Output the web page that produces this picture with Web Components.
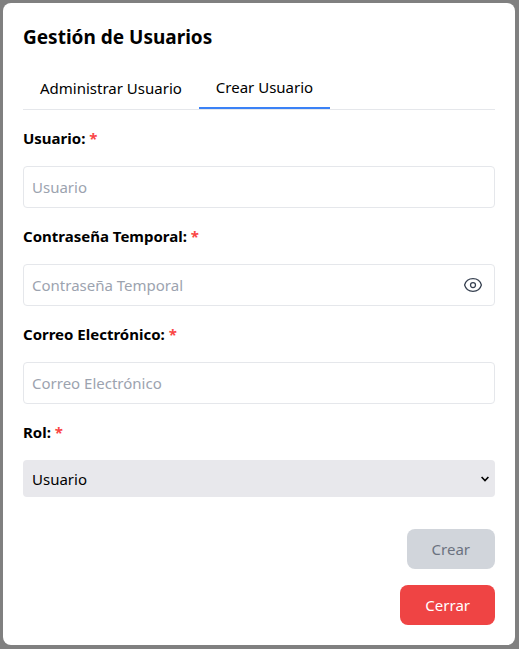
<!DOCTYPE html>
<html lang="es">
<head>
<meta charset="utf-8">
<meta name="viewport" content="width=device-width, initial-scale=1">
<title>Gestión de Usuarios</title>
<style>
  body { margin: 0; min-height: 100vh; box-sizing: border-box; padding: 3px 4px 4px 3px; background: #808080; color: #000; font: 15px/24px "Noto Sans", "Open Sans", sans-serif; }
</style>
</head>
<body>
<user-dialog heading="Gestión de Usuarios">
  <tab-bar slot="tabs">
    <tab-item>Administrar Usuario</tab-item>
    <tab-item active>Crear Usuario</tab-item>
  </tab-bar>
  <text-field label="Usuario" type="text"></text-field>
  <text-field label="Contraseña Temporal" type="password"></text-field>
  <text-field label="Correo Electrónico" type="email"></text-field>
  <role-select label="Rol" options="Usuario,Administrador"></role-select>
  <action-button slot="actions" variant="muted" disabled>Crear</action-button>
  <action-button slot="actions" variant="danger">Cerrar</action-button>
</user-dialog>
<script>
const base = `<style>
  *, *::before, *::after { box-sizing: border-box; }
  :host { display: block; }
  button, input, select { margin: 0; font: inherit; color: inherit; border: 0; background: none; }
  button:not(:disabled) { cursor: pointer; }
</style>`;
const labelStyle = `
  :host { display: grid; gap: 16px; }
  label { font-weight: 700; }
  .mark { color: #fa4646; }`;

class BaseElement extends HTMLElement {
  constructor() {
    super();
    this.attachShadow({ mode: 'open' });
  }
  connectedCallback() {
    this.shadowRoot.innerHTML = base + this.render();
  }
}

class UserDialog extends BaseElement {
  render() {
    return `<style>
      section { padding: 20px; border-radius: 8px; background: #fff; }
      h2 { margin: 0 0 16px; font-size: 19px; line-height: 28px; font-weight: 700; }
      form { display: grid; gap: 16px; margin-top: 16px; }
      footer { display: flex; flex-direction: column; align-items: flex-end; gap: 16px; margin-top: 32px; }
    </style>
    <section role="dialog" aria-labelledby="heading">
      <h2 id="heading">${this.getAttribute('heading')}</h2>
      <slot name="tabs"></slot>
      <form><slot></slot></form>
      <footer><slot name="actions"></slot></footer>
    </section>`;
  }
}

class TabBar extends BaseElement {
  render() {
    return `<style>
      nav { display: flex; border-bottom: 1px solid #e5e7eb; }
    </style><nav><slot></slot></nav>`;
  }
}

class TabItem extends BaseElement {
  render() {
    return `<style>
      :host { display: flex; }
      button { padding: 8px 17px; white-space: nowrap; }
      :host([active]) button { border-bottom: 2px solid #3b82f6; }
    </style><button type="button"><slot></slot></button>`;
  }
}

class TextField extends BaseElement {
  render() {
    const label = this.getAttribute('label');
    const type = this.getAttribute('type');
    const secret = type === 'password';
    return `<style>${labelStyle}
      .box { display: flex; align-items: center; border: 1px solid #e5e7eb; border-radius: 4px; }
      .box:focus-within { border-color: #3b82f6; }
      input { flex: 1; min-width: 0; height: 40px; padding: 8px; outline: 0; }
      input::placeholder { color: #9ca3af; opacity: 1; }
      button { display: grid; padding: 0 11px 0 0; color: #374151; }
      svg { display: block; }
    </style>
    <label for="field">${label}: <span class="mark">*</span></label>
    <div class="box">
      <input id="field" type="${type}" placeholder="${label}" required>
      ${secret ? `<button type="button" aria-label="Mostrar contraseña">
        <svg width="20" height="20" viewBox="0 0 20 20" fill="none" stroke="currentColor" stroke-width="1.25">
          <path d="M1.6 10C2.8 5.8 6.1 3.7 10 3.7S17.2 5.8 18.4 10C17.2 14.2 13.9 16.3 10 16.3S2.8 14.2 1.6 10Z"/>
          <circle cx="10" cy="10" r="2.5"/>
        </svg></button>` : ''}
    </div>`;
  }
}

class RoleSelect extends BaseElement {
  render() {
    const options = this.getAttribute('options').split(',');
    return `<style>${labelStyle}
      .box { display: grid; align-items: center; border-radius: 4px; background: #e8e8ec; }
      select, svg { grid-area: 1 / 1; }
      select { appearance: none; width: 100%; height: 37px; padding: 0 24px 0 9px; border-radius: 4px; }
      svg { justify-self: end; margin-right: 5px; pointer-events: none; }
    </style>
    <label for="role">${this.getAttribute('label')}: <span class="mark">*</span></label>
    <div class="box">
      <select id="role">${options.map(o => `<option>${o}</option>`).join('')}</select>
      <svg width="10" height="8" viewBox="0 0 10 8" fill="none" stroke="#000" stroke-width="1.6"><path d="M1.6 2L5 5.6L8.4 2"/></svg>
    </div>`;
  }
}

class ActionButton extends BaseElement {
  render() {
    return `<style>
      button { display: block; padding: 8px 25px; border-radius: 8px; }
      :host([variant="muted"]) button { background: #d1d5db; color: #6b7280; }
      :host([variant="danger"]) button { background: #ef4444; color: #fff; }
    </style><button type="button" ${this.hasAttribute('disabled') ? 'disabled' : ''}><slot></slot></button>`;
  }
}

customElements.define('user-dialog', UserDialog);
customElements.define('tab-bar', TabBar);
customElements.define('tab-item', TabItem);
customElements.define('text-field', TextField);
customElements.define('role-select', RoleSelect);
customElements.define('action-button', ActionButton);
</script>
</body>
</html>
